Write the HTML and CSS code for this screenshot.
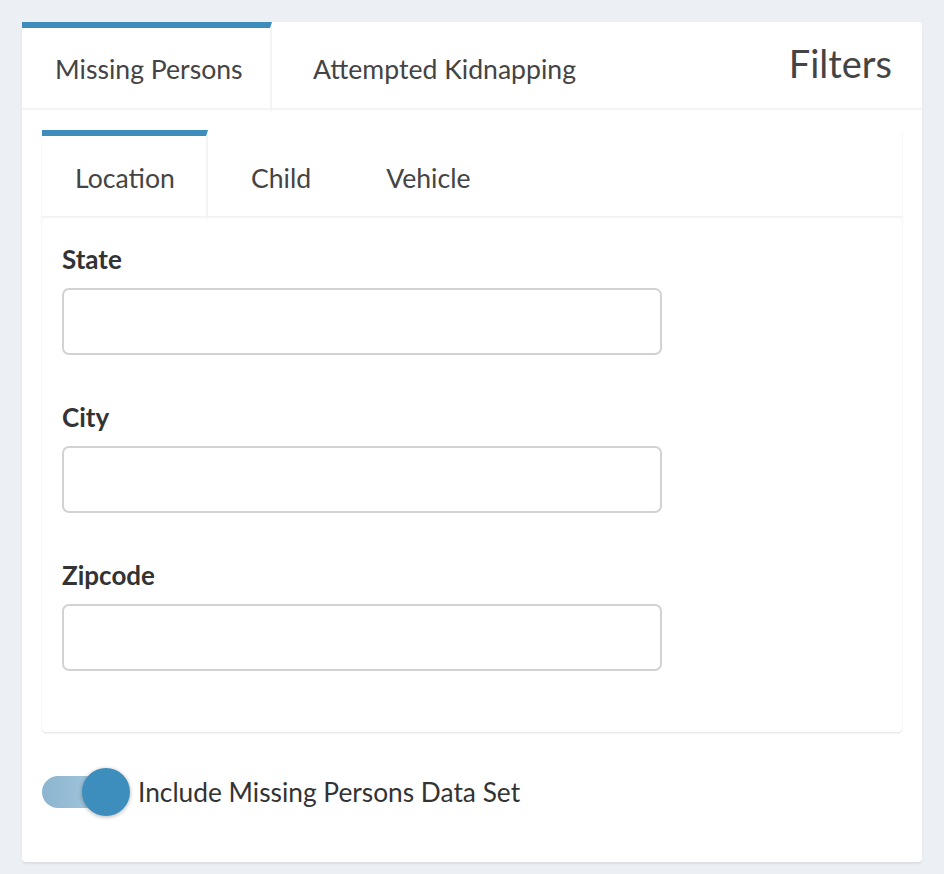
FILE: index.html
```html
<!DOCTYPE html>
<html>
<head>
<meta charset="utf-8">
<link rel="stylesheet" href="styles.css">
</head>
<body>
<div class="card">
  <div class="outer-nav">
    <div class="otab active">Missing Persons</div>
    <div class="otab second">Attempted Kidnapping</div>
    <div class="title">Filters</div>
  </div>
  <div class="outer-body">
    <div class="inner">
      <div class="inner-nav">
        <div class="itab active">Location</div>
        <div class="itab">Child</div>
        <div class="itab">Vehicle</div>
      </div>
      <div class="inner-body">
        <div class="field">
          <label class="lbl">State</label>
          <input class="inp" type="text">
        </div>
        <div class="field">
          <label class="lbl">City</label>
          <input class="inp" type="text">
        </div>
        <div class="field">
          <label class="lbl">Zipcode</label>
          <input class="inp" type="text">
        </div>
      </div>
    </div>
    <div class="toggle-row">
      <span class="switch"><span class="track"></span><span class="knob"></span></span>
      <span class="toggle-label">Include Missing Persons Data Set</span>
    </div>
  </div>
</div>
</body>
</html>
```

FILE: styles.css
```css
html, body {
  margin: 0;
  padding: 0;
  background: #ecf0f5;
}
body {
  padding: 22px;
  font-family: "Source Sans Pro", Lato, "Noto Sans", sans-serif;
  color: #444;
}
.card {
  width: 900px;
  height: 840px;
  background: #fff;
  border-radius: 4px;
  box-shadow: 0 2px 2px rgba(0,0,0,0.08);
  box-sizing: border-box;
}
.outer-nav {
  display: flex;
  height: 88px;
  border-bottom: 2px solid #f4f4f4;
  box-sizing: border-box;
  align-items: stretch;
}
.otab {
  font-size: 26.6px;
  white-space: nowrap;
  display: flex;
  align-items: center;
  padding: 0 33px 0 33px;
  border-top: 6px solid transparent;
  box-sizing: border-box;
  height: 88px;
  margin-bottom: -2px;
  color: #444;
}
.otab.active {
  width: 250px;
  padding-right: 0;
  border-top-color: #3c8dbc;
  border-right: 2px solid #f4f4f4;
  border-bottom: 2px solid #fff;
  height: 90px;
}
.otab.second {
  padding-left: 41px;
}
.title {
  margin-left: auto;
  font-size: 38px;
  padding-right: 30px;
  padding-top: 18px;
  color: #444;
}
.outer-body {
  padding: 20px 20px 0 20px;
}
.inner {
  border-radius: 4px;
  box-shadow: 0 1px 2px rgba(0,0,0,0.12);
  background: #fff;
  height: 602px;
}
.inner-nav {
  display: flex;
  height: 88px;
  border-bottom: 2px solid #f4f4f4;
  box-sizing: border-box;
}
.itab {
  font-size: 26.6px;
  white-space: nowrap;
  display: flex;
  align-items: center;
  padding: 2px 32px 0 43px;
  border-top: 6px solid transparent;
  box-sizing: border-box;
  height: 88px;
  color: #444;
}
.itab.active {
  width: 166px;
  padding-left: 33px;
  padding-right: 0;
  border-top-color: #3c8dbc;
  border-right: 2px solid #f4f4f4;
  border-bottom: 2px solid #fff;
  height: 90px;
  padding-top: 2px;
}
.inner-body {
  padding: 24px 20px 0 20px;
}
.field {
  display: flex;
  flex-direction: column;
  margin-bottom: 45px;
}
.lbl {
  font-size: 26px;
  font-weight: bold;
  color: #333;
  line-height: 34px;
  margin-bottom: 12px;
}
.inp {
  width: 600px;
  height: 67px;
  box-sizing: border-box;
  border: 2px solid #d2d2d2;
  border-radius: 7px;
  outline: none;
  background: #fff;
}
.toggle-row {
  display: flex;
  align-items: center;
  margin-top: 36px;
  height: 48px;
}
.switch {
  position: relative;
  width: 90px;
  height: 48px;
  flex: none;
}
.track {
  position: absolute;
  left: 0;
  top: 8px;
  width: 68px;
  height: 32px;
  border-radius: 16px;
  background: linear-gradient(90deg, #8db5cf, #a6c9df);
}
.knob {
  position: absolute;
  left: 40px;
  top: 0;
  width: 48px;
  height: 48px;
  border-radius: 50%;
  background: #3e8ebd;
  box-shadow: 0 1px 4px rgba(0,0,0,0.3);
}
.toggle-label {
  font-size: 26.3px;
  color: #333;
  margin-left: 6px;
}
```
